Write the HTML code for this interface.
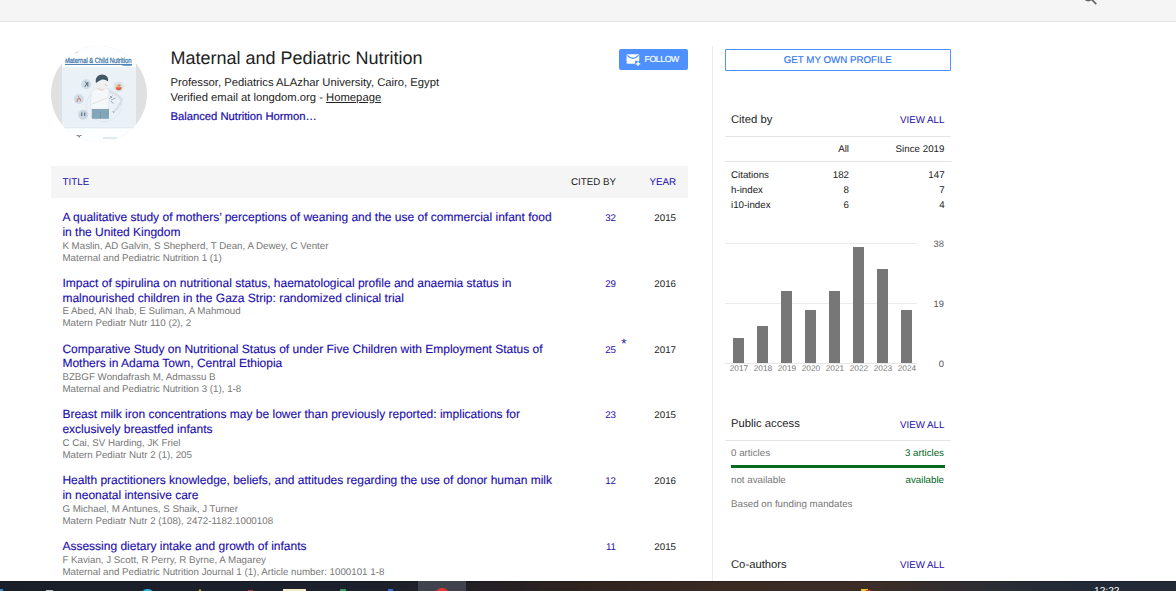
<!DOCTYPE html>
<html lang="en"><head><meta charset="utf-8"><title>Maternal and Pediatric Nutrition - Google Scholar</title>
<style>
html,body{margin:0;padding:0;}
body{text-rendering:geometricPrecision;width:1176px;height:591px;overflow:hidden;background:#fff;position:relative;font-family:"Liberation Sans",Arial,sans-serif;}
.t{position:absolute;white-space:nowrap;margin:0;}
.b{position:absolute;}
a{color:inherit;text-decoration:none;}
</style></head><body>

<div class="b" style="left:0;top:0;width:1176px;height:21px;background:#f5f5f5;border-bottom:1px solid #e2e2e2;"></div>
<svg class="b" style="left:1080px;top:0" width="24" height="8" viewBox="0 0 24 8"><circle cx="8.3" cy="-4" r="4.6" stroke="#666" stroke-width="1.6" fill="none"/><path d="M11.6 -0.6 L16.3 4.2" stroke="#666" stroke-width="1.7" fill="none"/></svg>
<div class="b" style="left:51px;top:46px;width:96px;height:96px;border-radius:50%;background:#e0e0e0;overflow:hidden;">
<svg class="b" style="left:11px;top:0" width="74" height="96" viewBox="62 46 74 96">
<rect x="62" y="46" width="74" height="96" fill="#fdfeff"/>
<rect x="62" y="67" width="74" height="61" fill="#eaf1f7"/>
<text x="65" y="63" font-family="Liberation Sans, sans-serif" font-size="7.6" fill="#356fa6" stroke="#356fa6" stroke-width="0.25" textLength="66.5" lengthAdjust="spacingAndGlyphs">Maternal &amp; Child Nutrition</text>
<path d="M75.5 53l3-1.3" stroke="#bcc5cd" stroke-width="0.7"/>
<rect x="65" y="64" width="67" height="0.9" fill="#3f78ae"/>
<rect x="122" y="64" width="10" height="1.7" rx="0.8" fill="#4a86bd"/>
<ellipse cx="104" cy="105" rx="17.5" ry="16.5" fill="none" stroke="#dde6ee" stroke-width="0.8"/>
<!-- child -->
<defs><filter id="bl" x="-10%" y="-10%" width="120%" height="120%"><feGaussianBlur stdDeviation="0.35"/></filter></defs>
<g filter="url(#bl)">
<path d="M108.5 91.5c5 1 10 4 13.5 8.5c-2 5-5 9-8.5 12" stroke="#d9e1e8" stroke-width="2.4" fill="none"/>
<path d="M91.5 92c2.5-3 6-4 8.5-4c1.5 1.5 4 1.5 6 0c2 0.5 3 2 3 4l-0.3 17h-18.5z" fill="#f5f7f9" stroke="#d4dde4" stroke-width="0.5"/>
<path d="M98 88.5c2 2 5.5 2 7.5 0" stroke="#e3b9a6" stroke-width="0.9" fill="none"/>
<path d="M92 104l15-6" stroke="#ccd6de" stroke-width="0.6" fill="none"/>
<path d="M96 83c-1.2-5 2-8.5 6-8.5s7 3 6 7c-2-1.5-4.5-2.5-7-1.5s-3.5 2-5 3z" fill="#3f5866"/>
<path d="M99.5 81.5c2-1.5 5.5-1.5 8 0.5c0.3 3-0.5 6-2.5 7.5c-3 0.5-5.5-1.5-6-4z" fill="#f3f1ef"/>
<path d="M105 84.5l1.5 1" stroke="#6b7f8b" stroke-width="0.6"/>
<rect x="91.8" y="109" width="17.2" height="9.8" fill="#82a6b8"/>
<path d="M100.5 112v6.8" stroke="#6d95a8" stroke-width="0.8"/>
<path d="M109.5 99l3-3.5M111 100l4.5-2M110.5 101l3 2.5M112 98l-2-2" stroke="#76899a" stroke-width="0.7"/>
<path d="M113 111l0.5 2" stroke="#7f93a0" stroke-width="0.8"/>
<!-- icons -->
<circle cx="86.2" cy="84.3" r="5" fill="#d0dce7"/><path d="M85.2 81.5l1.5 2.3l-1.8 3M87.8 82v4.5" stroke="#4a5f6e" stroke-width="1" fill="none"/>
<circle cx="78.9" cy="99" r="5" fill="#d0dce7"/><path d="M77 101.5c0-3.5 3.5-4 3.5-1M78.6 97v0.100" stroke="#c98572" stroke-width="1.3" stroke-linecap="round" fill="none"/>
<circle cx="83.2" cy="114.7" r="5" fill="#cad7e1"/><path d="M81.7 112.5v3.5M84.7 112.5v3.5" stroke="#5f7684" stroke-width="1.2"/>
<circle cx="118.7" cy="86.8" r="5" fill="#d6e1ea"/><path d="M115.7 87.3h6a3 3 0 0 1-6 0z" fill="#e2603c"/><circle cx="119.3" cy="85.6" r="1.4" fill="#ea8a50"/><circle cx="117.3" cy="86" r="0.9" fill="#f0b24a"/>
</g>
<rect x="62" y="127.5" width="74" height="0.800" fill="#dbe6ee"/>
<path d="M76.5 135.5h2l0.6 2l0.7-2h1.800" stroke="#555" stroke-width="0.7" fill="none"/>
<rect x="103" y="137.6" width="14" height="0.8" fill="#b5cbdd"/>
</svg>
</div>
<div class="t" style="top:48px;font-size:18px;line-height:20px;height:20px;color:#222;left:170.50px;">Maternal and Pediatric Nutrition</div>
<div class="t" style="top:77px;font-size:11.25px;line-height:12px;height:12px;color:#222;left:170.40px;">Professor, Pediatrics ALAzhar University, Cairo, Egypt</div>
<div class="t" style="top:92px;font-size:11.25px;line-height:12px;height:12px;color:#222;left:170.40px;">Verified email at longdom.org - <a style="text-decoration:underline">Homepage</a></div>
<div class="t" style="top:111px;font-size:11.25px;line-height:12px;height:12px;color:#1a0dab;left:170.40px;-webkit-text-stroke:0.2px #1a0dab;">Balanced Nutrition Hormon…</div>
<div class="b" style="left:619px;top:49px;width:69px;height:21px;background:#4d90fe;border-radius:2px;"></div>
<svg class="b" style="left:624px;top:51px" width="20" height="18" viewBox="624 51 20 18"><rect x="626.6" y="54.2" width="12.6" height="9.6" rx="0.9" fill="#fff"/><path d="M627.2 55.4 Q632.9 61.2 638.6 55.4" stroke="#4d90fe" stroke-width="1.3" fill="none"/><rect x="635" y="60.8" width="6" height="6" fill="#4d90fe"/><path d="M638 61.5v4.6M635.7 63.8h4.6" stroke="#fff" stroke-width="1.25"/></svg>
<div class="t" style="top:54px;font-size:8.7px;line-height:10px;height:10px;color:#fff;left:644.60px;letter-spacing:-0.42px;-webkit-text-stroke:0.2px #fff;">FOLLOW</div>
<div class="b" style="left:712px;top:46px;width:1px;height:535px;background:#ebebeb;"></div>
<div class="b" style="left:725px;top:49px;width:224px;height:20px;border:1px solid #4d90fe;border-radius:1px;background:#fff;"></div>
<div class="t" style="top:55px;font-size:9.75px;line-height:11px;height:11px;color:#2f74f2;left:783.70px;-webkit-text-stroke:0.15px #2f74f2;">GET MY OWN PROFILE</div>
<div class="b" style="left:51px;top:166px;width:637px;height:32px;background:#f5f5f5;"></div>
<div class="t" style="top:177px;font-size:9.75px;line-height:11px;height:11px;color:#1a0dab;left:62.60px;">TITLE</div>
<div class="t" style="top:177px;font-size:9.75px;line-height:11px;height:11px;color:#222;left:571.00px;">CITED BY</div>
<div class="t" style="top:177px;font-size:9.75px;line-height:11px;height:11px;color:#1a0dab;left:649.50px;">YEAR</div>
<a class="t" style="top:210px;font-size:12px;line-height:14px;height:14px;color:#1a0dab;left:62.40px;-webkit-text-stroke:0.12px #1a0dab;">A qualitative study of mothers’ perceptions of weaning and the use of commercial infant food</a>
<a class="t" style="top:225px;font-size:12px;line-height:14px;height:14px;color:#1a0dab;left:62.40px;-webkit-text-stroke:0.12px #1a0dab;">in the United Kingdom</a>
<div class="t" style="top:241px;font-size:9.75px;line-height:11px;height:11px;color:#777;left:62.40px;">K Maslin, AD Galvin, S Shepherd, T Dean, A Dewey, C Venter</div>
<div class="t" style="top:253px;font-size:9.75px;line-height:11px;height:11px;color:#777;left:62.40px;">Maternal and Pediatric Nutrition 1 (1)</div>
<div class="t" style="top:213px;font-size:9.75px;line-height:11px;height:11px;color:#1a0dab;right:560.00px;">32</div>
<div class="t" style="top:213px;font-size:9.75px;line-height:11px;height:11px;color:#222;right:500.00px;">2015</div>
<a class="t" style="top:276px;font-size:12px;line-height:14px;height:14px;color:#1a0dab;left:62.40px;-webkit-text-stroke:0.12px #1a0dab;">Impact of spirulina on nutritional status, haematological profile and anaemia status in</a>
<a class="t" style="top:291px;font-size:12px;line-height:14px;height:14px;color:#1a0dab;left:62.40px;-webkit-text-stroke:0.12px #1a0dab;">malnourished children in the Gaza Strip: randomized clinical trial</a>
<div class="t" style="top:306px;font-size:9.75px;line-height:11px;height:11px;color:#777;left:62.40px;">E Abed, AN Ihab, E Suliman, A Mahmoud</div>
<div class="t" style="top:318px;font-size:9.75px;line-height:11px;height:11px;color:#777;left:62.40px;">Matern Pediatr Nutr 110 (2), 2</div>
<div class="t" style="top:279px;font-size:9.75px;line-height:11px;height:11px;color:#1a0dab;right:560.00px;">29</div>
<div class="t" style="top:279px;font-size:9.75px;line-height:11px;height:11px;color:#222;right:500.00px;">2016</div>
<a class="t" style="top:342px;font-size:12px;line-height:14px;height:14px;color:#1a0dab;left:62.40px;-webkit-text-stroke:0.12px #1a0dab;">Comparative Study on Nutritional Status of under Five Children with Employment Status of</a>
<a class="t" style="top:356px;font-size:12px;line-height:14px;height:14px;color:#1a0dab;left:62.40px;-webkit-text-stroke:0.12px #1a0dab;">Mothers in Adama Town, Central Ethiopia</a>
<div class="t" style="top:372px;font-size:9.75px;line-height:11px;height:11px;color:#777;left:62.40px;">BZBGF Wondafrash M, Admassu B</div>
<div class="t" style="top:384px;font-size:9.75px;line-height:11px;height:11px;color:#777;left:62.40px;">Maternal and Pediatric Nutrition 3 (1), 1-8</div>
<div class="t" style="top:345px;font-size:9.75px;line-height:11px;height:11px;color:#1a0dab;right:560.00px;">25</div>
<div class="t" style="top:336px;font-size:13.5px;line-height:15px;height:15px;color:#1a0dab;left:621.30px;">*</div>
<div class="t" style="top:345px;font-size:9.75px;line-height:11px;height:11px;color:#222;right:500.00px;">2017</div>
<a class="t" style="top:407px;font-size:12px;line-height:14px;height:14px;color:#1a0dab;left:62.40px;-webkit-text-stroke:0.12px #1a0dab;">Breast milk iron concentrations may be lower than previously reported: implications for</a>
<a class="t" style="top:422px;font-size:12px;line-height:14px;height:14px;color:#1a0dab;left:62.40px;-webkit-text-stroke:0.12px #1a0dab;">exclusively breastfed infants</a>
<div class="t" style="top:438px;font-size:9.75px;line-height:11px;height:11px;color:#777;left:62.40px;">C Cai, SV Harding, JK Friel</div>
<div class="t" style="top:450px;font-size:9.75px;line-height:11px;height:11px;color:#777;left:62.40px;">Matern Pediatr Nutr 2 (1), 205</div>
<div class="t" style="top:410px;font-size:9.75px;line-height:11px;height:11px;color:#1a0dab;right:560.00px;">23</div>
<div class="t" style="top:410px;font-size:9.75px;line-height:11px;height:11px;color:#222;right:500.00px;">2015</div>
<a class="t" style="top:473px;font-size:12px;line-height:14px;height:14px;color:#1a0dab;left:62.40px;-webkit-text-stroke:0.12px #1a0dab;">Health practitioners knowledge, beliefs, and attitudes regarding the use of donor human milk</a>
<a class="t" style="top:488px;font-size:12px;line-height:14px;height:14px;color:#1a0dab;left:62.40px;-webkit-text-stroke:0.12px #1a0dab;">in neonatal intensive care</a>
<div class="t" style="top:504px;font-size:9.75px;line-height:11px;height:11px;color:#777;left:62.40px;">G Michael, M Antunes, S Shaik, J Turner</div>
<div class="t" style="top:516px;font-size:9.75px;line-height:11px;height:11px;color:#777;left:62.40px;">Matern Pediatr Nutr 2 (108), 2472-1182.1000108</div>
<div class="t" style="top:476px;font-size:9.75px;line-height:11px;height:11px;color:#1a0dab;right:560.00px;">12</div>
<div class="t" style="top:476px;font-size:9.75px;line-height:11px;height:11px;color:#222;right:500.00px;">2016</div>
<a class="t" style="top:539px;font-size:12px;line-height:14px;height:14px;color:#1a0dab;left:62.40px;-webkit-text-stroke:0.12px #1a0dab;">Assessing dietary intake and growth of infants</a>
<div class="t" style="top:555px;font-size:9.75px;line-height:11px;height:11px;color:#777;left:62.40px;">F Kavian, J Scott, R Perry, R Byrne, A Magarey</div>
<div class="t" style="top:567px;font-size:9.75px;line-height:11px;height:11px;color:#777;left:62.40px;">Maternal and Pediatric Nutrition Journal 1 (1), Article number: 1000101 1-8</div>
<div class="t" style="top:542px;font-size:9.75px;line-height:11px;height:11px;color:#1a0dab;right:560.00px;">11</div>
<div class="t" style="top:542px;font-size:9.75px;line-height:11px;height:11px;color:#222;right:500.00px;">2015</div>
<div class="t" style="top:114px;font-size:11.25px;line-height:12px;height:12px;color:#222;left:731.00px;">Cited by</div>
<div class="t" style="top:115px;font-size:9.75px;line-height:11px;height:11px;color:#1a0dab;left:900.00px;">VIEW ALL</div>
<div class="b" style="left:725px;top:136px;width:226px;height:1px;background:#e5e5e5;"></div>
<div class="t" style="top:144px;font-size:9.75px;line-height:11px;height:11px;color:#222;right:327.00px;">All</div>
<div class="t" style="top:144px;font-size:9.75px;line-height:11px;height:11px;color:#222;right:231.60px;">Since 2019</div>
<div class="b" style="left:725px;top:161px;width:226px;height:1px;background:#e5e5e5;"></div>
<div class="t" style="top:170px;font-size:9.75px;line-height:11px;height:11px;color:#222;left:731.00px;">Citations</div>
<div class="t" style="top:170px;font-size:9.75px;line-height:11px;height:11px;color:#222;right:327.00px;">182</div>
<div class="t" style="top:170px;font-size:9.75px;line-height:11px;height:11px;color:#222;right:231.40px;">147</div>
<div class="t" style="top:185px;font-size:9.75px;line-height:11px;height:11px;color:#222;left:731.00px;">h-index</div>
<div class="t" style="top:185px;font-size:9.75px;line-height:11px;height:11px;color:#222;right:327.00px;">8</div>
<div class="t" style="top:185px;font-size:9.75px;line-height:11px;height:11px;color:#222;right:231.40px;">7</div>
<div class="t" style="top:200px;font-size:9.75px;line-height:11px;height:11px;color:#222;left:731.00px;">i10-index</div>
<div class="t" style="top:200px;font-size:9.75px;line-height:11px;height:11px;color:#222;right:327.00px;">6</div>
<div class="t" style="top:200px;font-size:9.75px;line-height:11px;height:11px;color:#222;right:231.40px;">4</div>
<div class="b" style="left:725px;top:243px;width:192px;height:1px;background:#ebebeb;"></div>
<div class="b" style="left:725px;top:303px;width:192px;height:1px;background:#ebebeb;"></div>
<div class="b" style="left:725px;top:363px;width:192px;height:1px;background:#e6e6e6;"></div>
<div class="b" style="left:733.0px;top:338px;width:11px;height:25px;background:#777;"></div>
<div class="t" style="top:364px;font-size:8.25px;line-height:9px;height:9px;color:#777;left:0.00px;left:718.9px;width:40px;text-align:center;">2017</div>
<div class="b" style="left:757.0px;top:326px;width:11px;height:37px;background:#777;"></div>
<div class="t" style="top:364px;font-size:8.25px;line-height:9px;height:9px;color:#777;left:0.00px;left:742.9px;width:40px;text-align:center;">2018</div>
<div class="b" style="left:781.0px;top:291px;width:11px;height:72px;background:#777;"></div>
<div class="t" style="top:364px;font-size:8.25px;line-height:9px;height:9px;color:#777;left:0.00px;left:766.9px;width:40px;text-align:center;">2019</div>
<div class="b" style="left:805.0px;top:310px;width:11px;height:53px;background:#777;"></div>
<div class="t" style="top:364px;font-size:8.25px;line-height:9px;height:9px;color:#777;left:0.00px;left:790.9px;width:40px;text-align:center;">2020</div>
<div class="b" style="left:829.0px;top:291px;width:11px;height:72px;background:#777;"></div>
<div class="t" style="top:364px;font-size:8.25px;line-height:9px;height:9px;color:#777;left:0.00px;left:814.9px;width:40px;text-align:center;">2021</div>
<div class="b" style="left:853.0px;top:247px;width:11px;height:116px;background:#777;"></div>
<div class="t" style="top:364px;font-size:8.25px;line-height:9px;height:9px;color:#777;left:0.00px;left:838.9px;width:40px;text-align:center;">2022</div>
<div class="b" style="left:877.0px;top:269px;width:11px;height:94px;background:#777;"></div>
<div class="t" style="top:364px;font-size:8.25px;line-height:9px;height:9px;color:#777;left:0.00px;left:862.9px;width:40px;text-align:center;">2023</div>
<div class="b" style="left:901.0px;top:310px;width:11px;height:53px;background:#777;"></div>
<div class="t" style="top:364px;font-size:8.25px;line-height:9px;height:9px;color:#777;left:0.00px;left:886.9px;width:40px;text-align:center;">2024</div>
<div class="t" style="top:238px;font-size:9.4px;line-height:11px;height:11px;color:#555;right:232.00px;">38</div>
<div class="t" style="top:298px;font-size:9.4px;line-height:11px;height:11px;color:#555;right:232.00px;">19</div>
<div class="t" style="top:358px;font-size:9.4px;line-height:11px;height:11px;color:#555;right:232.00px;">0</div>
<div class="t" style="top:418px;font-size:11.25px;line-height:12px;height:12px;color:#222;left:731.00px;">Public access</div>
<div class="t" style="top:420px;font-size:9.75px;line-height:11px;height:11px;color:#1a0dab;left:900.00px;">VIEW ALL</div>
<div class="b" style="left:725px;top:440px;width:226px;height:1px;background:#e5e5e5;"></div>
<div class="t" style="top:448px;font-size:9.75px;line-height:11px;height:11px;color:#777;left:731.00px;">0 articles</div>
<div class="t" style="top:448px;font-size:9.75px;line-height:11px;height:11px;color:#006621;right:232.00px;">3 articles</div>
<div class="b" style="left:731px;top:465px;width:214px;height:3px;background:#076a22;"></div>
<div class="t" style="top:475px;font-size:9.75px;line-height:11px;height:11px;color:#777;left:731.00px;">not available</div>
<div class="t" style="top:475px;font-size:9.75px;line-height:11px;height:11px;color:#006621;right:232.00px;">available</div>
<div class="t" style="top:499px;font-size:9.75px;line-height:11px;height:11px;color:#777;left:731.00px;">Based on funding mandates</div>
<div class="t" style="top:559px;font-size:11.25px;line-height:12px;height:12px;color:#222;left:731.00px;">Co-authors</div>
<div class="t" style="top:560px;font-size:9.75px;line-height:11px;height:11px;color:#1a0dab;left:900.00px;">VIEW ALL</div>
<div class="b" style="left:0;top:581px;width:1176px;height:10px;background:linear-gradient(90deg,#1a1e29 0%,#1b202c 30%,#221f25 40%,#30231f 50%,#3a2a22 62%,#3b2d27 75%,#2a2d35 85%,#222a37 92%,#232a36 100%);"></div>
<div class="b" style="left:0;top:581px;width:1176px;height:1px;background:rgba(0,0,0,0.25);"></div>
<div class="b" style="left:418px;top:581px;width:48px;height:10px;background:#40424e;"></div>
<div class="b" style="left:435px;top:588.4px;width:14px;height:14px;border-radius:50%;background:#e5382c;"></div>
<div class="b" style="left:0;top:589px;width:3px;height:2px;background:#2f8ee0;"></div>
<div class="b" style="left:46px;top:589.5px;width:7px;height:2px;background:#b8bcc2;"></div>
<div class="b" style="left:140px;top:588.8px;width:15px;height:15px;border-radius:50%;background:#27b8e8;"></div>
<div class="b" style="left:196px;top:589px;width:0;height:0;border-left:4px solid transparent;border-right:4px solid transparent;border-bottom:6px solid #f2c81e;"></div>
<div class="b" style="left:248px;top:589.5px;width:5px;height:2px;background:#c9302c;"></div>
<div class="b" style="left:283px;top:589px;width:23px;height:2px;background:#f3e9c6;"></div>
<div class="b" style="left:340px;top:589.3px;width:6px;height:2px;background:#2f9e4f;"></div>
<div class="b" style="left:388px;top:589.3px;width:5px;height:2px;background:#2b6fd6;"></div>
<div class="b" style="left:861px;top:589px;width:7px;height:2px;background:#f0c41c;"></div>
<div class="b" style="left:866px;top:589.5px;width:5px;height:2px;background:#d42a2a;"></div>
<div class="t" style="top:586px;font-size:10.2px;line-height:11px;height:11px;color:#fff;left:1094.00px;">12:22</div>
</body></html>
